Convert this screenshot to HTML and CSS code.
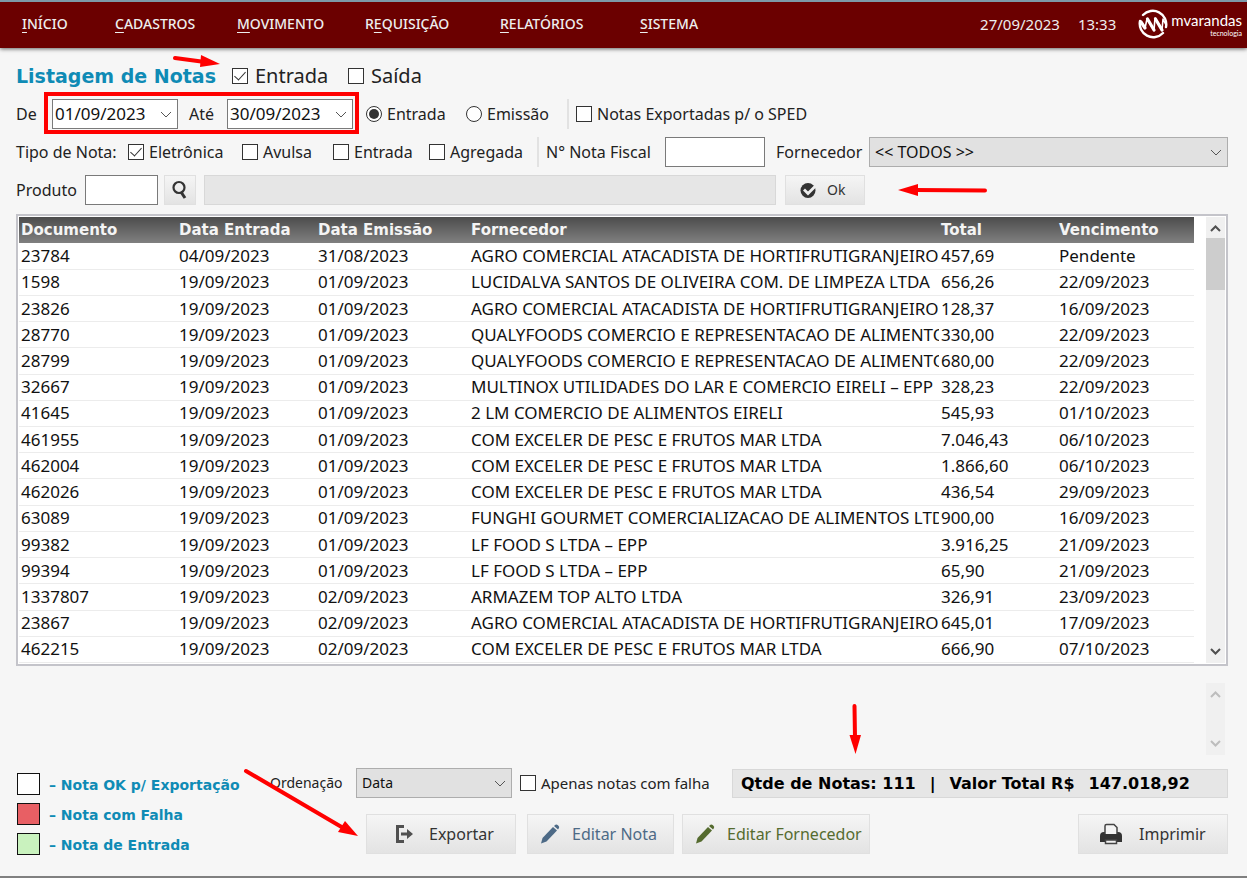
FILE: index.html
```
<!DOCTYPE html>
<html lang="pt-br">
<head>
<meta charset="UTF-8">
<meta name="viewport" content="width=device-width, initial-scale=1.0">
<title>Listagem de Notas</title>
<link rel="stylesheet" href="styles.css">
</head>
<body>

<header class="topbar">
    <nav class="menu">
        <a href="#"><u>I</u>NÍCIO</a>
        <a href="#"><u>C</u>ADASTROS</a>
        <a href="#"><u>M</u>OVIMENTO</a>
        <a href="#">R<u>E</u>QUISIÇÃO</a>
        <a href="#"><u>R</u>ELATÓRIOS</a>
        <a href="#"><u>S</u>ISTEMA</a>
    </nav>
    <div class="clock"><span>27/09/2023</span><span>13:33</span></div>
    <div class="logo">
        <svg width="30" height="30" viewBox="0 0 30 30" fill="none" stroke="#fff" stroke-linecap="round" stroke-linejoin="round">
            <path d="M5 6A13.500 13.500 0 0 1 28 18M25 24A13.500 13.500 0 0 1 2 12" stroke-width="2.400"/>
            <path d="M2 12L7 19L9 10L16 21L17 9L24 20" stroke-width="1.600"/>
            <path d="M3 13L7 19M9.500 10L16 21M17.500 10L24 21" stroke-width="3.200"/>
            <path d="M24 21L25 10L28 16" stroke-width="1.600"/>
        </svg>
        <div class="logo-text"><span>mvarandas</span><small>tecnologia</small></div>
    </div>
</header>

<main class="page">
    <!-- Filtros -->
    <form class="filters">
        <div class="row row-title">
            <h1>Listagem de Notas</h1>
            <label class="check big"><input type="checkbox" checked>Entrada</label>
            <label class="check big"><input type="checkbox">Saída</label>
        </div>

        <div class="row row-period">
            <label for="de">De</label>
            <select id="de" class="field date"><option>01/09/2023</option></select>
            <label for="ate" class="mid">Até</label>
            <select id="ate" class="field date"><option>30/09/2023</option></select>
            <label class="check first"><input type="radio" name="periodo" checked>Entrada</label>
            <label class="check"><input type="radio" name="periodo">Emissão</label>
            <label class="check divided"><input type="checkbox">Notas Exportadas p/ o SPED</label>
        </div>

        <div class="row row-type">
            <span>Tipo de Nota:</span>
            <label class="check"><input type="checkbox" checked>Eletrônica</label>
            <label class="check"><input type="checkbox">Avulsa</label>
            <label class="check"><input type="checkbox">Entrada</label>
            <label class="check"><input type="checkbox">Agregada</label>
            <label for="numero" class="divided">N° Nota Fiscal</label>
            <input type="text" id="numero" class="field">
            <label for="fornecedor" class="mid">Fornecedor</label>
            <select id="fornecedor" class="field gray"><option>&lt;&lt; TODOS &gt;&gt;</option></select>
        </div>

        <div class="row row-product">
            <label for="produto">Produto</label>
            <input type="text" id="produto" class="field">
            <button type="button" class="btn search" aria-label="Buscar produto">
                <svg width="18" height="20" viewBox="0 0 18 20" fill="none" stroke="#333">
                    <circle cx="8" cy="7.500" r="5.500" stroke-width="2.200"/>
                    <path d="M10 12L14 18" stroke-width="3"/>
                </svg>
            </button>
            <input type="text" class="field readonly" aria-label="Nome do produto" readonly>
            <button type="button" class="btn ok">
                <svg width="17" height="17" viewBox="0 0 17 17">
                    <circle cx="8" cy="8.500" r="7.500" fill="#333"/>
                    <path d="M4 7.500L8 11.500L16 3.500" fill="none" stroke="#eee" stroke-width="2.800"/>
                </svg>
                Ok
            </button>
        </div>
    </form>

    <!-- Tabela de notas -->
    <div class="list">
        <table id="notas">
            <colgroup>
                <col class="c-doc"><col class="c-entrada"><col class="c-emissao"><col><col class="c-total"><col class="c-venc">
            </colgroup>
            <thead>
                <tr>
                    <th>Documento</th>
                    <th>Data Entrada</th>
                    <th>Data Emissão</th>
                    <th>Fornecedor</th>
                    <th>Total</th>
                    <th>Vencimento</th>
                </tr>
            </thead>
            <tbody></tbody>
        </table>
        <div class="scroll">
            <svg width="11" height="7" viewBox="0 0 11 7"><path d="M1 6L5.500 1.500L10 6"/></svg>
            <div class="thumb"></div>
            <svg width="11" height="7" viewBox="0 0 11 7"><path d="M1 1L5.500 5.500L10 1"/></svg>
        </div>
    </div>

    <div class="memo">
        <div class="scroll off">
            <svg width="11" height="7" viewBox="0 0 11 7"><path d="M1 6L5.500 1.500L10 6"/></svg>
            <svg width="11" height="7" viewBox="0 0 11 7"><path d="M1 1L5.500 5.500L10 1"/></svg>
        </div>
    </div>

    <!-- Legenda, totais e ações -->
    <footer class="bottom">
        <ul class="legend">
            <li><i class="swatch white"></i>– Nota OK p/ Exportação</li>
            <li><i class="swatch red"></i>– Nota com Falha</li>
            <li><i class="swatch green"></i>– Nota de Entrada</li>
        </ul>
        <div class="panel">
            <div class="totals">
                <label for="ordem">Ordenação</label>
                <select id="ordem" class="field gray"><option>Data</option></select>
                <label class="check"><input type="checkbox">Apenas notas com falha</label>
                <div class="sum"><span>Qtde de Notas: 111</span><span>|</span><span>Valor Total R$</span><span>147.018,92</span></div>
            </div>
            <div class="actions">
                <button type="button" class="btn export">
                    <svg width="20" height="20" viewBox="0 0 20 20">
                        <path d="M10 2.500H3.500V17.500H10" fill="none" stroke="#505050" stroke-width="3"/>
                        <path d="M7 8.500H13V5L19 10L13 15V11.500H7Z" fill="#505050"/>
                    </svg>
                    Exportar
                </button>
                <button type="button" class="btn edit blue">
                    <svg width="20" height="20" viewBox="0 0 20 20" fill="currentColor">
                        <path d="M1 19.500L2.500 14L13 3L17 6.500L6.500 17.500Z"/><path d="M14 2L15.500 .700Q16.500 0 18 1.200Q19.800 2.700 19 4L18 5.500Z"/>
                    </svg>
                    Editar Nota
                </button>
                <button type="button" class="btn supplier green-text">
                    <svg width="20" height="20" viewBox="0 0 20 20" fill="currentColor">
                        <path d="M1 19.500L2.500 14L13 3L17 6.500L6.500 17.500Z"/><path d="M14 2L15.500 .700Q16.500 0 18 1.200Q19.800 2.700 19 4L18 5.500Z"/>
                    </svg>
                    Editar Fornecedor
                </button>
                <button type="button" class="btn print">
                    <svg width="24" height="22" viewBox="0 0 24 22">
                        <path d="M1 13Q1 9 5 9H19Q23 9 23 13V19H1Z" fill="#333"/>
                        <path d="M6 12V3Q6 1.500 7.500 1.500H15L18 4.500V12Z" fill="#f4f4f4" stroke="#444" stroke-width="1.500"/>
                        <path d="M5 11H19V16H5Z" fill="#333"/>
                        <path d="M6.500 17H17.500V20.500H6.500Z" fill="#f0f0f0" stroke="#444" stroke-width="1.500"/>
                    </svg>
                    Imprimir
                </button>
            </div>
        </div>
    </footer>
</main>

<!-- Marcações sobre a tela -->
<svg class="marks" width="1000" height="850" viewBox="0 0 1000 850" fill="none" stroke="#f00" stroke-linecap="round" aria-hidden="true">
    <rect x="46" y="94" width="311" height="38" stroke-width="4"/>
    <path d="M175 58L205 62M985 190.500L915 190M854.500 706L855 738M246 771L345 829" stroke-width="4"/>
    <g fill="#f00" stroke="none">
        <path d="M220 64L201 55L200 67Z"/>
        <path d="M898 190L918 184V196Z"/>
        <path d="M855.500 754L849.500 735H861Z"/>
        <path d="M358 836L345 821L338 832Z"/>
    </g>
</svg>

<script>
    const notas = [
        ["23784", "04/09/2023", "31/08/2023", "AGRO COMERCIAL ATACADISTA DE HORTIFRUTIGRANJEIROS", "457,69", "Pendente"],
        ["1598", "19/09/2023", "01/09/2023", "LUCIDALVA SANTOS DE OLIVEIRA COM. DE LIMPEZA LTDA", "656,26", "22/09/2023"],
        ["23826", "19/09/2023", "01/09/2023", "AGRO COMERCIAL ATACADISTA DE HORTIFRUTIGRANJEIROS", "128,37", "16/09/2023"],
        ["28770", "19/09/2023", "01/09/2023", "QUALYFOODS COMERCIO E REPRESENTACAO DE ALIMENTOS", "330,00", "22/09/2023"],
        ["28799", "19/09/2023", "01/09/2023", "QUALYFOODS COMERCIO E REPRESENTACAO DE ALIMENTOS", "680,00", "22/09/2023"],
        ["32667", "19/09/2023", "01/09/2023", "MULTINOX UTILIDADES DO LAR E COMERCIO EIRELI – EPP", "328,23", "22/09/2023"],
        ["41645", "19/09/2023", "01/09/2023", "2 LM COMERCIO DE ALIMENTOS EIRELI", "545,93", "01/10/2023"],
        ["461955", "19/09/2023", "01/09/2023", "COM EXCELER DE PESC E FRUTOS MAR LTDA", "7.046,43", "06/10/2023"],
        ["462004", "19/09/2023", "01/09/2023", "COM EXCELER DE PESC E FRUTOS MAR LTDA", "1.866,60", "06/10/2023"],
        ["462026", "19/09/2023", "01/09/2023", "COM EXCELER DE PESC E FRUTOS MAR LTDA", "436,54", "29/09/2023"],
        ["63089", "19/09/2023", "01/09/2023", "FUNGHI GOURMET COMERCIALIZACAO DE ALIMENTOS LTDA", "900,00", "16/09/2023"],
        ["99382", "19/09/2023", "01/09/2023", "LF FOOD S LTDA – EPP", "3.916,25", "21/09/2023"],
        ["99394", "19/09/2023", "01/09/2023", "LF FOOD S LTDA – EPP", "65,90", "21/09/2023"],
        ["1337807", "19/09/2023", "02/09/2023", "ARMAZEM TOP ALTO LTDA", "326,91", "23/09/2023"],
        ["23867", "19/09/2023", "02/09/2023", "AGRO COMERCIAL ATACADISTA DE HORTIFRUTIGRANJEIROS", "645,01", "17/09/2023"],
        ["462215", "19/09/2023", "02/09/2023", "COM EXCELER DE PESC E FRUTOS MAR LTDA", "666,90", "07/10/2023"]
    ];

    // Preenche a tabela de notas
    const tableBody = document.querySelector("#notas tbody");
    notas.forEach(nota => {
        const tr = document.createElement("tr");
        nota.forEach(valor => {
            const td = document.createElement("td");
            td.textContent = valor;
            tr.appendChild(td);
        });
        tableBody.appendChild(tr);
    });
</script>
</body>
</html>
```
FILE: styles.css
```
* {
    box-sizing: border-box;
}

body {
    margin: 0;
    min-height: 100vh;
    display: flex;
    flex-direction: column;
    position: relative;
    background-color: #f6f6f6;
    border-bottom: 2px solid #808080;
    color: #222;
    font-family: "Noto Sans", "Open Sans", sans-serif;
    font-size: 16px;
    line-height: 20px;
}

input, select, button {
    font: inherit;
    color: inherit;
    margin: 0;
}

/* Barra superior */
.topbar {
    display: flex;
    align-items: center;
    height: 48px;
    padding: 0 5px 2px 22px;
    background-color: #6b0000;
    border-top: 2px solid #7d99a8;
    box-shadow: 0 1px 4px rgba(0, 0, 0, 0.6);
    color: #eee;
}

.menu {
    display: grid;
    grid-template-columns: 93px 122px 128px 135px 140px 80px;
    flex: 1;
    font-size: 14px;
    font-weight: 500;
}

.menu a {
    color: inherit;
    text-decoration: none;
}

.menu u {
    text-underline-offset: 3px;
}

.clock {
    display: flex;
    gap: 18px;
    margin-right: 22px;
    font-size: 15px;
}

.logo {
    display: flex;
    align-items: center;
    gap: 3px;
}

.logo-text {
    display: flex;
    flex-direction: column;
    font-family: Lato, sans-serif;
    font-size: 15px;
    line-height: 18px;
    color: #fff;
}

.logo-text small {
    font-size: 7px;
    line-height: 8px;
    text-align: right;
}

.page {
    flex: 1;
    padding: 13px 19px 0 16px;
}

/* Filtros */
.filters {
    display: flex;
    flex-direction: column;
    gap: 8px;
}

.row {
    display: grid;
    align-items: center;
    height: 30px;
    white-space: nowrap;
}

.row-title {
    grid-template-columns: 216px 116px 1fr;
}

.row-period {
    grid-template-columns: 36px 126px 49px 126px 113px 101px 1fr;
}

.row-type {
    grid-template-columns: 112px 114px 91px 96px 108px 128px 100px 104px 1fr;
}

.row-product {
    grid-template-columns: 69px 73px 38px minmax(0, 589px) 80px;
}

h1 {
    margin: 0;
    font-family: "DejaVu Sans", sans-serif;
    font-size: 19px;
    line-height: 28px;
    color: #0f8bb5;
}

.mid {
    padding-left: 11px;
}

.divided {
    padding-left: 7px;
    border-left: 2px solid #e2e2e2;
    line-height: 30px;
}

.check {
    display: flex;
    align-items: center;
    gap: 5px;
}

.check.first {
    padding-left: 13px;
}

.big {
    font-size: 20px;
    gap: 7px;
}

.check input {
    appearance: none;
    flex: none;
    display: grid;
    place-items: center;
    width: 16px;
    height: 16px;
    border: 1px solid #333;
    background-color: #fff;
}

.check input[type="radio"] {
    border-radius: 50%;
}

.check input[type="radio"]:checked::before {
    content: "";
    width: 10px;
    height: 10px;
    border-radius: 50%;
    background-color: #333;
}

.check input[type="checkbox"]:checked::before {
    content: "";
    width: 5px;
    height: 10px;
    margin-bottom: 3px;
    border: solid #333;
    border-width: 0 1px 1px 0;
    transform: rotate(42deg);
}

.field {
    width: 100%;
    height: 30px;
    padding: 0 5px;
    border: 1px solid #7a7a7a;
    border-radius: 0;
    background-color: #fff;
    color: #111;
}

select.field {
    appearance: none;
    padding: 0 20px 0 5px;
    background-image: url("data:image/svg+xml,%3Csvg xmlns='http://www.w3.org/2000/svg' width='12' height='7'%3E%3Cpath d='M1 1l5 5 5-5' fill='none' stroke='%23555'/%3E%3C/svg%3E");
    background-repeat: no-repeat;
    background-position: right 5px center;
}

select.date {
    padding-left: 2px;
    font-size: 17px;
}

select.gray {
    background-color: #e1e1e1;
    border-color: #adadad;
}

.readonly {
    background-color: #e6e6e6;
    border-color: #d8d8d8;
}

.row-product .readonly {
    width: auto;
    margin: 0 9px 0 8px;
}

.btn {
    display: flex;
    align-items: center;
    padding: 0;
    border: 1px solid #e0e0e0;
    background: linear-gradient(#f5f5f5, #e3e3e3);
    color: #333;
    white-space: nowrap;
    cursor: pointer;
}

.row .btn {
    height: 30px;
}

.row .search {
    justify-content: center;
    margin-left: 6px;
}

.ok {
    gap: 10px;
    padding-left: 14px;
    font-size: 14px;
}

/* Tabela */
.list {
    display: flex;
    gap: 12px;
    margin-top: 9px;
    padding: 1px;
    border: 2px solid #c4c4ca;
    background-color: #fff;
}

#notas {
    flex: 1;
    width: 100%;
    height: 446px;
    table-layout: fixed;
    border-collapse: collapse;
    color: #111;
}

.c-doc { width: 158px; }
.c-entrada { width: 139px; }
.c-emissao { width: 153px; }
.c-total { width: 118px; }
.c-venc { width: 137px; }

th, td {
    height: 26px;
    padding: 0 0 0 2px;
    overflow: hidden;
    white-space: nowrap;
    text-align: left;
}

thead {
    background: linear-gradient(#4c4c4c, #808080);
    color: #f4f4f4;
}

th {
    font-family: "DejaVu Sans", sans-serif;
    font-size: 15px;
}

td {
    border-bottom: 1px solid #ececec;
    font-size: 17px;
}

.scroll {
    display: flex;
    flex-direction: column;
    align-items: center;
    width: 19px;
    padding: 8px 0;
    background-color: #f0f0f0;
}

.scroll svg {
    flex: none;
    fill: none;
    stroke: #505050;
    stroke-width: 2;
}

.thumb {
    width: 100%;
    height: 52px;
    margin: 6px 0 auto;
    background-color: #cdcdcd;
}

.memo {
    display: flex;
    justify-content: flex-end;
    margin-top: 17px;
    padding-right: 3px;
}

.off {
    height: 72px;
    justify-content: space-between;
}

.off svg {
    stroke: #bdbdbd;
}

/* Rodapé */
.bottom {
    display: flex;
    margin-top: 13px;
}

.legend {
    display: flex;
    flex-direction: column;
    gap: 8px;
    width: 254px;
    margin: 0;
    padding: 5px 0 0 1px;
    list-style: none;
    color: #0f8bb5;
    font-family: "DejaVu Sans", sans-serif;
    font-size: 14px;
    font-weight: bold;
    line-height: 24px;
    white-space: nowrap;
}

.legend li {
    display: flex;
    gap: 9px;
    height: 22px;
}

.swatch {
    width: 23px;
    height: 22px;
    border: 1px solid #111;
}

.white { background-color: #fff; }
.red { background-color: #e85f64; }
.green { background-color: #c9f2be; }

.panel {
    flex: 1;
}

.totals {
    display: grid;
    grid-template-columns: 86px 156px 220px 1fr;
    align-items: center;
    font-size: 14px;
    white-space: nowrap;
}

.totals .check {
    padding-left: 8px;
    font-size: 15px;
}

.sum {
    display: flex;
    gap: 14px;
    height: 29px;
    padding: 0 8px;
    border: 1px solid #d8d8d8;
    background-color: #e6e6e6;
    color: #000;
    font-family: "DejaVu Sans", sans-serif;
    font-size: 16px;
    font-weight: bold;
    line-height: 27px;
}

.actions {
    display: flex;
    margin-top: 16px;
    padding-left: 96px;
}

.actions .btn {
    height: 40px;
    gap: 12px;
    padding-left: 12px;
    font-size: 16px;
}

.actions .export {
    width: 150px;
    gap: 15px;
    padding-left: 27px;
}

.actions .edit {
    width: 147px;
    margin: 0 8px 0 11px;
}

.actions .supplier {
    width: 188px;
}

.actions .print {
    width: 150px;
    gap: 16px;
    padding-left: 20px;
    margin-left: auto;
}

.actions .blue { color: #4d6a86; }
.actions .green-text { color: #556b2f; }

.marks {
    position: absolute;
    top: 0;
    left: 0;
    pointer-events: none;
}
```
